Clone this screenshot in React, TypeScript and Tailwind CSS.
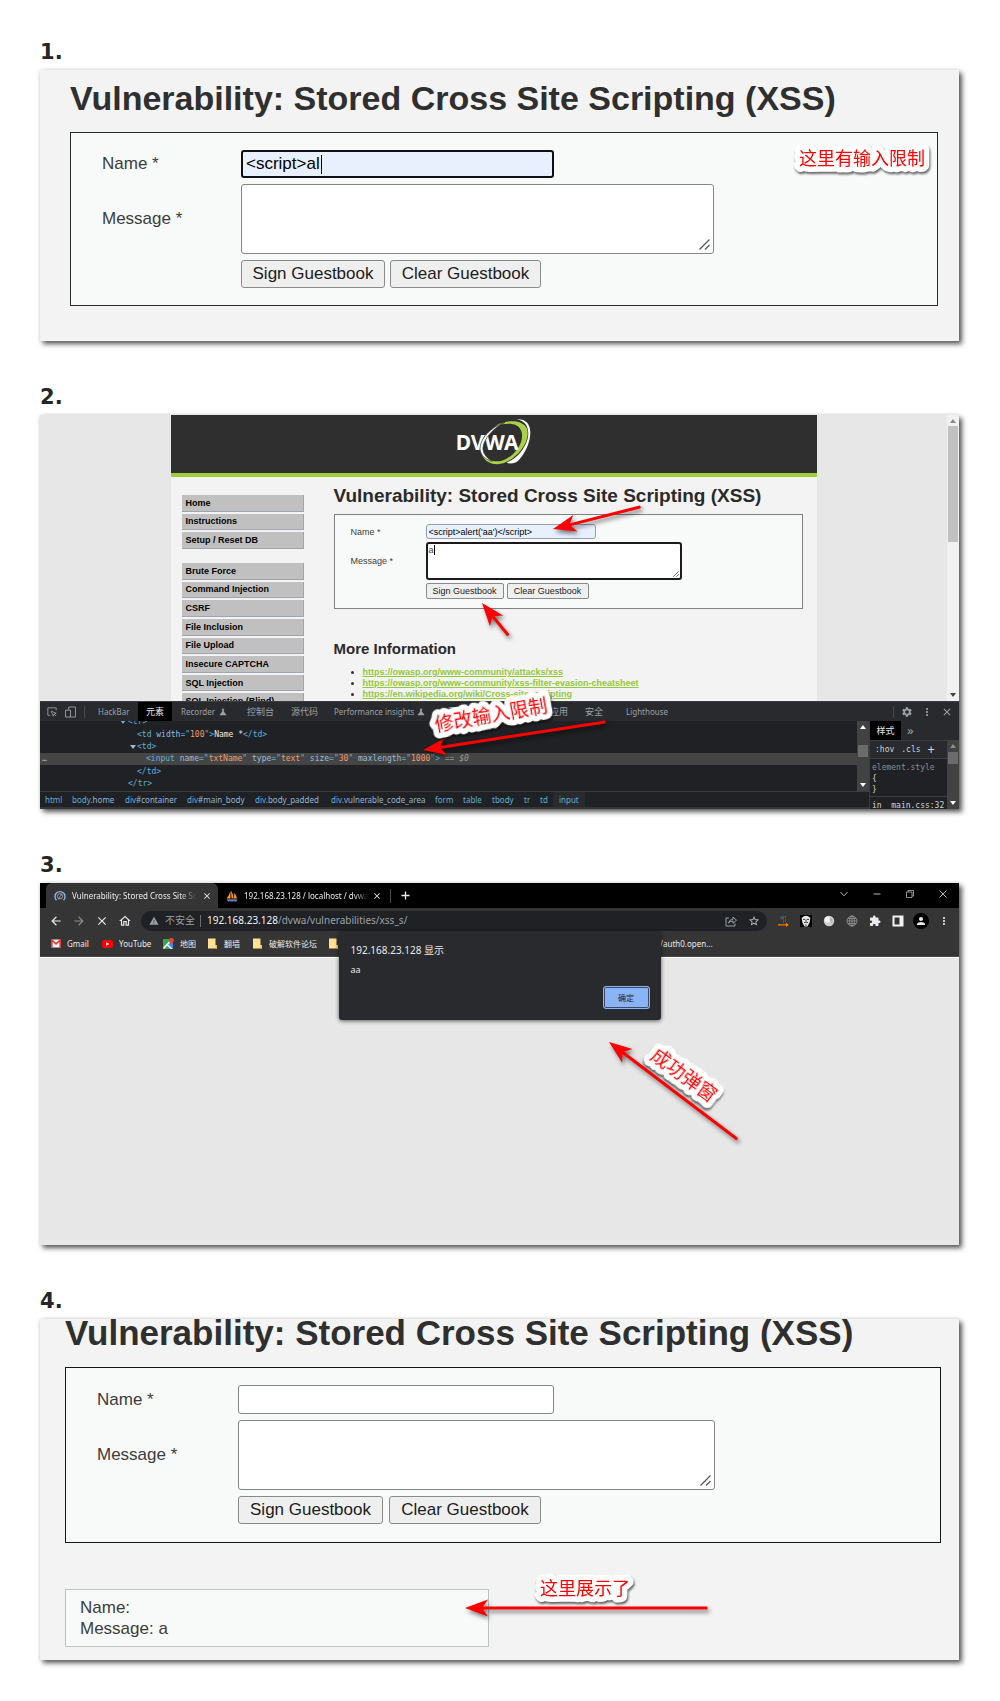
import type { ReactNode } from "react";
import {
  MdArrowBack,
  MdArrowForward,
  MdClose,
  MdExtension,
  MdMoreVert,
  MdOutlineHome,
  MdPerson,
  MdScience,
  MdSettings,
  MdStarBorder,
  MdWarning,
} from "react-icons/md";

const uiFont = "font-['Noto_Sans','Noto_Sans_CJK_SC',sans-serif]";
const arial = "font-['Liberation_Sans',Arial,sans-serif]";

/* ---------- shared pieces ---------- */

function Step({ n, children }: { n: number; children: ReactNode }) {
  return (
    <section className="flex flex-col gap-0.5">
      <h2 className="pt-px font-['DejaVu_Sans',Verdana,sans-serif] text-[21px] leading-8 font-bold text-[#262626]">{n}.</h2>
      <div className="relative shadow-[3px_3px_5px_rgba(0,0,0,0.65),0_0_4px_rgba(0,0,0,0.12)]">{children}</div>
    </section>
  );
}

/* Arrow pointing from tail to tip, drawn in its own small canvas. */
function Arrow({ from, to, className }: { from: [number, number]; to: [number, number]; className: string }) {
  const dx = to[0] - from[0];
  const dy = to[1] - from[1];
  const len = Math.hypot(dx, dy);
  const angle = (Math.atan2(dy, dx) * 180) / Math.PI;
  return (
    <svg
      className={`pointer-events-none absolute z-10 overflow-visible drop-shadow-[2px_3px_2px_rgba(0,0,0,0.5)] ${className}`}
      width={Math.max(Math.abs(dx), 1)}
      height={Math.max(Math.abs(dy), 1)}
      aria-hidden="true"
    >
      <g transform={`translate(${from[0]} ${from[1]}) rotate(${angle})`} fill="#fe0000">
        <path d={`M0 -1.5 L${len - 17} -1.5 L${len - 17} 1.5 L0 1.5 Q-1.5 0 0 -1.5Z`} />
        <path d={`M${len} 0 L${len - 23} 8.5 L${len - 17} 0 L${len - 23} -8.5Z`} />
      </g>
    </svg>
  );
}

/* Red handwritten-style remark with a thick white outline. */
function Note({ text, size, className }: { text: string; size: number; className: string }) {
  return (
    <svg
      className={`pointer-events-none absolute z-20 h-6 overflow-visible drop-shadow-[1px_2px_1px_rgba(0,0,0,0.6)] ${className}`}
      width={text.length * size}
    >
      <text
        y="19"
        fontSize={size}
        fill="#fe0000"
        stroke="#fff"
        strokeWidth="11"
        strokeLinejoin="round"
        strokeLinecap="round"
        paintOrder="stroke"
        fontFamily="'Noto Sans CJK SC', sans-serif"
      >
        {text}
      </text>
    </svg>
  );
}

function Grip({ small = false }: { small?: boolean }) {
  return (
    <svg
      viewBox="0 0 11 11"
      className={small ? "pointer-events-none absolute right-[3px] bottom-[3px] size-1.5" : "pointer-events-none absolute right-1 bottom-1 size-[11px]"}
      stroke="#555"
      strokeWidth={small ? 1.6 : 1.2}
      aria-hidden="true"
    >
      <path d="M0.5 10.5 L10.5 0.5 M6 10.5 L10.5 6" />
    </svg>
  );
}

type FormStyle = {
  box: string;
  rows: string;
  col: string;
  input: string;
  inputLine: string;
  area: string;
  areaLine: string;
  button: string;
  sign: string;
  clear: string;
  buttons: string;
};

function GuestbookForm({
  id,
  s,
  name = "",
  message = "",
  nameCaret,
  messageCaret,
  small,
}: {
  id: string;
  s: FormStyle;
  name?: string;
  message?: string;
  nameCaret?: string;
  messageCaret?: string;
  small?: boolean;
}) {
  return (
    <form className={`border bg-[#f8faf9] text-[#3c3c3c] ${s.box}`} onSubmit={(e) => e.preventDefault()}>
      <div className={`flex flex-col ${s.rows}`}>
        <div className="flex items-center">
          <label htmlFor={`${id}-name`} className={`shrink-0 ${s.col}`}>
            Name *
          </label>
          <div className={`relative ${s.input}`}>
            <input
              id={`${id}-name`}
              type="text"
              defaultValue={name}
              className={`block size-full rounded-[3px] text-black outline-none ${s.inputLine}`}
            />
            {nameCaret && <i className={`absolute w-px bg-black ${nameCaret}`} />}
          </div>
        </div>
        <div className="flex items-center">
          <label htmlFor={`${id}-message`} className={`shrink-0 ${s.col}`}>
            Message *
          </label>
          <div className={`relative ${s.area}`}>
            <textarea
              id={`${id}-message`}
              defaultValue={message}
              className={`block size-full resize-none overflow-hidden rounded-[3px] bg-white outline-none ${s.areaLine}`}
            />
            {messageCaret && <i className={`absolute w-px bg-black ${messageCaret}`} />}
            <Grip small={small} />
          </div>
        </div>
        <div className="flex">
          <span className={`shrink-0 ${s.col}`} />
          <div className={`flex ${s.buttons}`}>
            <button type="submit" className={`border border-[#8a8a8a] bg-[#efefef] text-[#1c1c1c] ${s.button} ${s.sign}`}>
              Sign Guestbook
            </button>
            <button type="reset" className={`border border-[#8a8a8a] bg-[#efefef] text-[#1c1c1c] ${s.button} ${s.clear}`}>
              Clear Guestbook
            </button>
          </div>
        </div>
      </div>
    </form>
  );
}

const bigForm: FormStyle = {
  box: "border-[#2a2a2a] pt-[17px] pb-[17px] pl-[31px] text-[17px] leading-5",
  rows: "gap-1.5",
  col: "w-[139px]",
  input: "h-7 w-[313px]",
  inputLine: "border-2 border-[#101014] bg-[#e8f0fe] px-[3px]",
  area: "h-[70px] w-[473px]",
  areaLine: "border border-[#858585]",
  button: "h-7 rounded-[3px]",
  sign: "w-36",
  clear: "w-[151px]",
  buttons: "gap-[5px]",
};

const resultForm: FormStyle = {
  ...bigForm,
  box: "border-[#151515] pt-[17px] pb-[18px] pl-[31px] text-[17px] leading-5",
  col: "w-[141px]",
  input: "h-[29px] w-[316px]",
  inputLine: "border border-[#858585] bg-white px-[3px]",
  area: "h-[70px] w-[477px]",
  sign: "w-[145px]",
  clear: "w-[152px]",
  buttons: "gap-1.5",
};

const smallForm: FormStyle = {
  box: "border-[#808080] pt-[9px] pb-[9px] pl-4 text-[9px] leading-3",
  rows: "gap-[3px]",
  col: "w-[75px]",
  input: "h-[15px] w-[170px]",
  inputLine: "border border-[#9a9fa8] bg-[#e8f0fe] px-0.5",
  area: "h-[38px] w-64",
  areaLine: "border-2 border-[#1a1a1a] px-px text-[#3c3c3c]",
  button: "h-4 rounded-[2px]",
  sign: "w-[78px]",
  clear: "w-[82px]",
  buttons: "gap-[3px]",
};

const title = "Vulnerability: Stored Cross Site Scripting (XSS)";

/* ---------- step 1 ---------- */

function StepOne() {
  return (
    <div className={`bg-[#f3f3f3] pt-2 pr-[21px] pb-[35px] pl-[30px] ${arial}`}>
      <h1 className="text-[34px] leading-10 font-bold whitespace-nowrap text-[#2f2f2f]">{title}</h1>
      <div className="mt-3.5">
        <GuestbookForm id="one" s={bigForm} name="<script>al" nameCaret="left-20 top-[5px] h-[19px]" />
      </div>
      <Note text="这里有输入限制" size={18} className="top-[76px] right-[34px]" />
    </div>
  );
}

/* ---------- step 2 ---------- */

function DvwaLogo() {
  return (
    <div className="relative h-[62px] w-[100px]" role="img" aria-label="DVWA">
      <svg viewBox="0 0 300 186" className="block size-full" aria-hidden="true">
        <path fill="#fff" d="M215 22 C245 20 262 40 254 80 C250 105 228 145 210 152 C200 156 190 154 185 152 C215 140 240 110 248 80 C254 50 245 28 215 22Z" />
        <path fill="#a9d048" d="M150 42 C190 20 235 24 246 50 C258 90 215 140 175 154 C145 162 112 150 108 116 C122 142 145 152 170 146 C205 136 238 95 230 60 C222 32 190 30 150 42Z" />
        <text x="32" y="115" fill="#fff" fontSize="63" fontWeight="700" fontFamily="'Noto Sans', sans-serif">
          DVWA
        </text>
        <path fill="#fff" stroke="#2f2f2f" strokeWidth="2" d="M180 31 C135 46 106 80 105 110 C107 130 120 142 142 148 C120 136 113 120 114 106 C117 80 145 48 180 31Z" />
      </svg>
    </div>
  );
}

const menuTop = ["Home", "Instructions", "Setup / Reset DB"];
const menuRest = ["Brute Force", "Command Injection", "CSRF", "File Inclusion", "File Upload", "Insecure CAPTCHA", "SQL Injection", "SQL Injection (Blind)"];

function Menu({ items, className }: { items: string[]; className: string }) {
  return (
    <ul className={`grid auto-rows-fr gap-0.5 ${className}`}>
      {items.map((item) => (
        <li key={item} className="grid">
          <a href="#" className="flex items-center border-r border-b border-[#a0a4ad] bg-[#c0c0c0] pl-1 text-[9px] leading-3 font-bold text-black">
            {item}
          </a>
        </li>
      ))}
    </ul>
  );
}

const links = [
  "https://owasp.org/www-community/attacks/xss",
  "https://owasp.org/www-community/xss-filter-evasion-cheatsheet",
  "https://en.wikipedia.org/wiki/Cross-site_scripting",
];

function Triangle({ up = false, className = "" }: { up?: boolean; className?: string }) {
  return (
    <svg viewBox="0 0 6 4" className={`h-1 w-1.5 shrink-0 fill-current ${className}`} aria-hidden="true">
      <path d={up ? "M0 4 L3 0 L6 4Z" : "M0 0 L3 4 L6 0Z"} />
    </svg>
  );
}

function DvwaPage() {
  return (
    <div className={`flex h-[286px] overflow-hidden bg-[#e7e7e7] ${arial}`}>
      <div className="flex-1">
        <div className="mx-auto w-[646px] bg-[#f3f3f3]">
          <div className="flex h-[62px] justify-center overflow-hidden border-b-4 border-[#a2cc39] bg-[#2f2f2f]">
            <div className="-mt-[3px] ml-0.5">
              <DvwaLogo />
            </div>
          </div>
          <div className="flex pt-[18px] pl-[11px]">
            <nav className="flex w-[122px] flex-col gap-3.5" aria-label="DVWA">
              <Menu items={menuTop} className="h-[54px]" />
              <Menu items={menuRest} className="h-[147px]" />
            </nav>
            <div className="-mt-[11px] ml-[30px] w-[469px]">
              <h1 className="text-[19px] leading-6 font-bold whitespace-nowrap text-[#2a2a2a]">{title}</h1>
              <div className="mt-1.5">
                <GuestbookForm
                  id="two"
                  s={smallForm}
                  small
                  name="<script>alert('aa')</script>"
                  message="a"
                  messageCaret="left-2 top-[3px] h-[10px]"
                />
              </div>
              <h2 className="mt-[30px] text-[15px] leading-5 font-bold text-[#2a2a2a]">More Information</h2>
              <ul className="mt-2 list-disc pl-[29px] text-[9px] leading-[11px] text-[#333]">
                {links.map((l) => (
                  <li key={l}>
                    <a href={l} className="font-bold text-[#93c83a] underline">
                      {l}
                    </a>
                  </li>
                ))}
              </ul>
            </div>
          </div>
        </div>
      </div>
      <div className="flex w-3 flex-col items-center bg-[#f1f1f1] text-[#8a8a8a]">
        <div className="flex h-[11px] items-center">
          <Triangle up />
        </div>
        <div className="h-[116px] w-2.5 bg-[#c1c1c1]" />
        <Triangle className="mt-auto mb-1 text-[#444]" />
      </div>
    </div>
  );
}

function Attr({ name, value }: { name: string; value: string }) {
  return (
    <>
      {" "}
      <span className="text-[#9bbbdc]">{name}</span>=&quot;<span className="text-[#f29766]">{value}</span>&quot;
    </>
  );
}

const crumbs: [string, string, string][] = [
  ["html", "", "w-[27px]"],
  ["body", ".home", "w-[53px]"],
  ["div", "#container", "w-[62px]"],
  ["div", "#main_body", "w-[68px]"],
  ["div", ".body_padded", "w-[76px]"],
  ["div", ".vulnerable_code_area", "w-[104px]"],
  ["form", "", "w-7"],
  ["table", "", "w-[29px]"],
  ["tbody", "", "w-8"],
  ["tr", "", "w-4"],
  ["td", "", "w-[13px]"],
];

function DevTools() {
  const cjk = "shrink-0 text-left text-[9px]";
  const latin = "shrink-0 text-left";
  return (
    <div className={`bg-[#202124] text-[8px] text-[#9aa0a6] ${uiFont}`}>
      <div className="flex h-5 items-center border-t border-[#3c3d40] bg-[#292a2d]">
        <div className="flex w-[58px] shrink-0 items-center gap-2 pl-[7px]">
          <svg viewBox="0 0 12 12" className="size-2.5" fill="none" stroke="currentColor" aria-label="Inspect">
            <path d="M4 10 H1 V1 H11 V4 M5 5 L11 7.5 L8.5 8.5 L7.5 11 Z M8.5 8.5 L11 11" />
          </svg>
          <svg viewBox="0 0 12 13" className="h-3 w-[11px]" fill="none" stroke="currentColor" aria-label="Device toolbar">
            <path d="M4 4 V1 H11.5 V12 H6 M0.5 4.5 H6 V12 H0.5Z" />
          </svg>
          <i className="h-3 w-px bg-[#4a4b4e]" />
        </div>
        <button className={`${latin} w-10`}>HackBar</button>
        <button className="h-full w-[34px] shrink-0 bg-black text-[9px] text-[#e8eaed]">元素</button>
        <button className={`${latin} flex w-[75px] items-center gap-[3px] pl-[9px]`}>
          Recorder <MdScience className="size-2.5" />
        </button>
        <button className={`${cjk} w-11`}>控制台</button>
        <button className={`${cjk} w-[43px]`}>源代码</button>
        <button className={`${latin} flex w-[114px] items-center gap-0.5`}>
          Performance insights <MdScience className="size-2.5" />
        </button>
        <button className={`${cjk} w-[102px]`}>网络</button>
        <button className={`${cjk} w-[35px]`}>应用</button>
        <button className={`${cjk} w-[41px]`}>安全</button>
        <button className={latin}>Lighthouse</button>
        <div className="mr-1.5 ml-auto flex items-center gap-2">
          <i className="h-3 w-px bg-[#4a4b4e]" />
          <MdSettings className="-ml-px size-3" />
          <MdMoreVert className="size-3" />
          <MdClose className="size-3" />
        </div>
      </div>
      <div className="flex h-[88px]">
        <div className="flex min-w-0 flex-1 flex-col">
          <div className="flex h-[70px]">
            <pre className="min-w-0 flex-1 overflow-hidden font-['DejaVu_Sans_Mono',monospace] leading-3 text-[#5db0d7]">
              <div className="-mt-[5px] flex h-3 items-center pl-[80px]">
                <Triangle className="mr-0.5" />
                &lt;tr&gt;
              </div>
              <div className="h-[13px] pl-[97px] leading-[13px]">
                &lt;td
                <Attr name="width" value="100" />
                &gt;<b className="font-medium text-[#e8eaed]">Name *</b>&lt;/td&gt;
              </div>
              <div className="flex h-3 items-center pl-[90px]">
                <Triangle className="mr-px text-[#b0b3b8]" />
                &lt;td&gt;
              </div>
              <div className="flex h-3 bg-[#454545]">
                <span className="w-[106px] pl-0.5 text-[#b0b3b8]">…</span>
                <span>
                  &lt;input
                  <Attr name="name" value="txtName" />
                  <Attr name="type" value="text" />
                  <Attr name="size" value="30" />
                  <Attr name="maxlength" value="1000" />
                  &gt;<i className="text-[#9a9a9a]"> == $0</i>
                </span>
              </div>
              <div className="h-[13px] pl-[97px] leading-[13px]">&lt;/td&gt;</div>
              <div className="h-3 pl-[88px]">&lt;/tr&gt;</div>
            </pre>
            <div className="flex w-3 flex-col items-center bg-[#424242] py-1 text-white">
              <Triangle up />
              <div className="mt-4 h-3 w-2.5 bg-[#6b6b6b]" />
              <Triangle className="mt-auto" />
            </div>
          </div>
          <div className="flex flex-1 items-center border-t border-b-2 border-t-[#3c3d40] border-b-[#35363a] pl-[5px] text-[#5db0d7]">
            {crumbs.map(([tag, rest, w], i) => (
              <span key={i} className={`shrink-0 ${w}`}>
                {tag}
                <span className="text-[#8fb4d8]">{rest}</span>
              </span>
            ))}
            <span className="flex h-full items-center bg-[#292a2d] px-1.5">input</span>
          </div>
        </div>
        <div className="flex w-[90px] shrink-0 flex-col border-l border-[#3c3d40]">
          <div className="flex h-[19px] shrink-0 items-center bg-[#292a2d]">
            <span className="flex h-full w-[31px] items-center justify-center bg-black text-[9px] text-[#e8eaed]">样式</span>
            <span className="ml-1.5 pb-0.5 text-[13px] leading-3">»</span>
          </div>
          <div className="flex h-[69px] font-['DejaVu_Sans_Mono',monospace]">
            <div className="min-w-0 flex-1 overflow-hidden">
              <div className="flex h-[19px] items-center gap-[7px] border-y border-[#3c3d40] bg-[#292a2d] pl-[5px] text-[#d0d3d7]">
                <span>:hov</span>
                <span>.cls</span>
                <span className="text-[12px]">+</span>
              </div>
              <div className="h-[37px] pt-[3px] pl-0.5 leading-[11px]">
                <div className="text-[#8a8d91]">element.style</div>
                <div className="text-[#d0d3d7]">{"{"}</div>
                <div className="text-[#d0d3d7]">{"}"}</div>
              </div>
              <div className="border-t border-[#3c3d40] pt-[3px] pl-0.5 whitespace-pre text-[#d0d3d7]">in  main.css:32</div>
            </div>
            <div className="flex w-3 shrink-0 flex-col items-center bg-[#424242] py-1 text-white">
              <Triangle up className="text-[#8a8a8a]" />
              <div className="mt-1 h-3 w-2.5 bg-[#6b6b6b]" />
              <Triangle className="mt-auto" />
            </div>
          </div>
        </div>
      </div>
    </div>
  );
}

function StepTwo() {
  return (
    <div>
      <DvwaPage />
      <DevTools />
      <Arrow className="top-[92px] left-[513px]" from={[87, 0]} to={[0, 22]} />
      <Arrow className="top-[188px] left-[442px]" from={[26, 32]} to={[0, 0]} />
      <Arrow className="top-[307px] left-[383px]" from={[182, 0]} to={[0, 28]} />
      <Note text="修改输入限制" size={19} className="top-[288px] left-[394px] -rotate-10" />
    </div>
  );
}

/* ---------- step 3 ---------- */

function Folder() {
  return (
    <svg viewBox="0 0 9 11" className="h-[11px] w-[9px] shrink-0" aria-hidden="true">
      <path fill="#fde293" d="M0 0.5 H7.5 V7 H9 V10.5 H0Z" />
      <path fill="#e9c35a" d="M7.5 7 H9 V10.5 H7.5Z" />
    </svg>
  );
}

function Bookmark({ icon, label, className }: { icon: ReactNode; label: string; className: string }) {
  return (
    <a href="#" className={`flex shrink-0 items-center ${className}`}>
      {icon}
      <span>{label}</span>
    </a>
  );
}

function BrowserTabs() {
  return (
    <div className="flex h-[25px] bg-black pl-1.5 text-[8px] text-[#e8eaed]">
      <div className="flex w-[172px] items-center rounded-t-md bg-[#353535] pr-1.5 pl-2">
        <svg viewBox="0 0 12 12" className="size-3 shrink-0" fill="none" aria-hidden="true">
          <path d="M2.5 10.2 A5 5 0 1 1 9.5 10.2" stroke="#8ab4f8" strokeWidth="1.4" />
          <circle cx="6" cy="6.3" r="2.6" stroke="#9aa0a6" />
          <path d="M4 9.5 L8 3.6" stroke="#9aa0a6" />
        </svg>
        <span className="ml-1.5 w-[125px] overflow-hidden whitespace-nowrap [mask-image:linear-gradient(90deg,#000_86%,transparent)]">
          Vulnerability: Stored Cross Site Scripting
        </span>
        <MdClose className="ml-auto size-2.5" />
      </div>
      <div className="flex w-[172px] items-center pr-2 pl-2">
        <svg viewBox="0 0 12 12" className="size-3 shrink-0" aria-hidden="true">
          <path fill="#f89c0e" d="M0.5 8.5 Q3 6 4.5 1 L4.5 8.5Z M5.5 8.5 L5 0.5 Q7.5 4 7.5 8.5Z M8 8.5 L8.2 3 Q10.5 5 11 8.5Z" />
          <path fill="#6c78af" d="M0.5 9.2 H11.5 L10.5 11.5 H2Z" />
        </svg>
        <span className="ml-1.5 w-[125px] overflow-hidden whitespace-nowrap [mask-image:linear-gradient(90deg,#000_88%,transparent)]">
          192.168.23.128 / localhost / dvwa / guestbook
        </span>
        <MdClose className="ml-auto size-2.5" />
      </div>
      <div className="flex items-center gap-2.5 text-[#e8eaed]">
        <i className="h-3.5 w-px bg-[#4a4b4e]" />
        <svg viewBox="0 0 10 10" className="size-[9px]" stroke="currentColor" strokeWidth="1.5" aria-label="New tab">
          <path d="M5 0.5 V9.5 M0.5 5 H9.5" />
        </svg>
      </div>
      <div className="mr-3 ml-auto flex items-center gap-[25px] pb-1 text-[#b4b4b4]">
        <svg viewBox="0 0 8 8" className="size-2" fill="none" stroke="currentColor" aria-label="Search tabs">
          <path d="M0.5 2 L4 5.8 L7.5 2" />
        </svg>
        <svg viewBox="0 0 8 8" className="size-2" fill="none" stroke="currentColor" aria-label="Minimize">
          <path d="M0.5 4 H7.5" />
        </svg>
        <svg viewBox="0 0 8 8" className="size-2" fill="none" stroke="currentColor" strokeWidth="0.8" aria-label="Restore">
          <path d="M0.5 2 H6 V7.5 H0.5Z M2 2 V0.5 H7.5 V6 H6" />
        </svg>
        <svg viewBox="0 0 8 8" className="size-2" fill="none" stroke="currentColor" aria-label="Close">
          <path d="M0.5 0.5 L7.5 7.5 M7.5 0.5 L0.5 7.5" />
        </svg>
      </div>
    </div>
  );
}

function AddressRow() {
  return (
    <div className="flex h-[25px] items-center pl-[9px] text-[#e8eaed]">
      <div className="flex w-[92px] shrink-0 items-center gap-[9px]">
        <MdArrowBack className="size-3.5" />
        <MdArrowForward className="size-3.5 text-[#8a8d91]" />
        <MdClose className="size-3.5" />
        <MdOutlineHome className="size-3.5" />
      </div>
      <div className="flex h-5 min-w-0 flex-1 items-center rounded-full bg-[#202124] pr-[7px] pl-2 text-[10px] text-[#9aa0a6]">
        <MdWarning className="size-2.5 shrink-0" />
        <span className="ml-1.5 shrink-0">不安全</span>
        <i className="mr-1.5 ml-[5px] h-3 w-px bg-[#6a6d70]" />
        <span className="text-[#f1f3f4]">192.168.23.128</span>
        <span>/dvwa/vulnerabilities/xss_s/</span>
        <svg viewBox="0 0 12 12" className="ml-auto size-3" fill="none" stroke="currentColor" aria-label="Share">
          <path d="M4 3 H1 V11 H10 V8.5 M3.5 8 Q4 4.5 8 4.3 V2 L11.5 5.2 L8 8.3 V6.2 Q5 6 3.5 8Z" />
        </svg>
        <MdStarBorder className="ml-[11px] size-3 text-[#c4c7c5]" />
      </div>
      <div className="mr-2.5 ml-2.5 flex shrink-0 items-center gap-[11px]">
        <svg viewBox="0 0 12 12" className="size-3" aria-hidden="true">
          <path d="M4.5 1.5 H9.5 M6.5 1.5 V8 M8.5 1.5 V8" stroke="#3f5866" fill="none" />
          <circle cx="4.8" cy="3" r="1.8" fill="#3f5866" />
          <path d="M1 9.3 H9 V7.8 L12 10 L9 12 V10.6 H1Z" fill="#f57c00" />
        </svg>
        <svg viewBox="0 0 12 12" className="size-3" aria-hidden="true">
          <rect width="12" height="12" fill="#000" />
          <path fill="#e6e6e6" d="M1.6 3 Q6 -1.5 10.4 3 L9.6 7.5 L7.5 11.5 H4.5 L2.4 7.5Z" />
          <path stroke="#111" fill="none" strokeWidth="0.8" d="M3 4.4 H5.2 M6.8 4.4 H9 M6 4.8 V6.6 M4 7.6 Q6 6.8 8 7.6 M6 9.2 V11" />
        </svg>
        <svg viewBox="0 0 12 12" className="size-3" aria-hidden="true">
          <circle cx="6" cy="6" r="5.2" fill="#cfcfcf" />
          <circle cx="4.6" cy="4.6" r="3" fill="#f2f2f2" />
          <path d="M6.5 2.5 L9.5 4 L9 8 L7 6Z" fill="#b2b2b2" />
        </svg>
        <svg viewBox="0 0 12 12" className="size-3" fill="none" stroke="#a0a0a0" strokeWidth="0.7" aria-hidden="true">
          <circle cx="6" cy="6" r="5" />
          <ellipse cx="6" cy="6" rx="2.4" ry="5" />
          <path d="M1 6 H11 M6 1 V11 M2 3.5 H10 M2 8.5 H10" />
        </svg>
        <MdExtension className="size-3" />
        <svg viewBox="0 0 12 12" className="size-3" aria-hidden="true">
          <path fill="#f1f3f4" fillRule="evenodd" d="M0.5 0.5 H11.5 V11.5 H0.5Z M2.5 2.5 V9.5 H7.5 V2.5Z" />
        </svg>
        <span className="-mx-0.5 flex size-4 items-center justify-center rounded-full bg-black">
          <MdPerson className="size-3" />
        </span>
        <MdMoreVert className="-mr-px size-3" />
      </div>
    </div>
  );
}

function Bookmarks() {
  return (
    <div className="flex h-6 items-center border-b border-[#4a4a4a] pb-0.5 pl-[11px] text-[8px] text-[#e8eaed]">
      <Bookmark
        className="w-[51px] gap-1.5"
        label="Gmail"
        icon={
          <svg viewBox="0 0 10 9" className="h-[9px] w-2.5" aria-hidden="true">
            <path fill="#f1f1f1" d="M0 0.5 H10 V8.5 H0Z" />
            <path fill="none" stroke="#e53935" strokeWidth="1.6" d="M0.8 8.5 V1 L5 4.8 L9.2 1 V8.5" />
          </svg>
        }
      />
      <Bookmark
        className="w-[61px] gap-1.5"
        label="YouTube"
        icon={
          <svg viewBox="0 0 11 8" className="h-2 w-[11px]" aria-hidden="true">
            <rect width="11" height="8" rx="2" fill="#f00" />
            <path fill="#fff" d="M4.2 2.2 L7.4 4 L4.2 5.8Z" />
          </svg>
        }
      />
      <Bookmark
        className="w-[45px] gap-1.5"
        label="地图"
        icon={
          <svg viewBox="0 0 11 11" className="size-[11px]" aria-hidden="true">
            <rect y="1" width="10" height="10" fill="#34a853" />
            <path fill="#4285f4" d="M10 11 L4 5 L10 3Z" />
            <path stroke="#f5f5f5" strokeWidth="1.6" d="M0.5 10.5 L7 3.5 M3.5 6 L9 11" />
            <path fill="#ea4335" d="M8.3 0 Q11 0 10.8 2.6 Q10.6 4 8.3 6.5 Q6 4 5.8 2.6 Q5.8 0 8.3 0Z" />
          </svg>
        }
      />
      <Bookmark className="w-[45px] gap-[7px]" label="翻墙" icon={<Folder />} />
      <Bookmark className="w-[76px] gap-[7px]" label="破解软件论坛" icon={<Folder />} />
      <Folder />
      <a href="#" className="ml-[322px]">
        /auth0.open...
      </a>
    </div>
  );
}

function StepThree() {
  return (
    <div className={`bg-[#353535] ${uiFont}`}>
      <BrowserTabs />
      <AddressRow />
      <Bookmarks />
      <div className="h-[288px] border-t border-white bg-[#e7e7e7]" />
      <div
        role="dialog"
        aria-label="192.168.23.128 显示"
        className="absolute top-12 left-1/2 flex h-[89px] w-[322px] -translate-x-[161px] flex-col rounded-[3px] bg-[#292a2d] pt-[11px] pr-[11px] pb-[11px] pl-3 text-[#e8eaed] shadow-[0_1px_4px_rgba(0,0,0,0.6)]"
      >
        <p className="text-[10px] leading-4">192.168.23.128 显示</p>
        <p className="mt-1 text-[9px] leading-4">aa</p>
        <button className="mt-auto ml-auto h-[23px] w-[47px] shrink-0 rounded-[3px] border border-[#8ab4f8] bg-[#8ab4f8] text-[8px] text-[#202124] shadow-[inset_0_0_0_1px_#3c4a63]">
          确定
        </button>
      </div>
      <Arrow className="top-[159px] left-[569px]" from={[128, 97]} to={[0, 0]} />
      <Note text="成功弹窗" size={19} className="top-[180px] left-[606px] rotate-36" />
    </div>
  );
}

/* ---------- step 4 ---------- */

function StepFour() {
  return (
    <div className={`flow-root bg-[#f3f3f3] pr-[18px] pb-[13px] pl-[25px] ${arial}`}>
      <h1 className="-mt-1.5 text-[35px] leading-10 font-bold whitespace-nowrap text-[#2f2f2f]">{title}</h1>
      <div className="mt-3.5">
        <GuestbookForm id="four" s={resultForm} />
      </div>
      <div className="mt-[46px] w-[424px] border border-[#bfc2c1] bg-[#f8faf9] py-[7px] pl-3.5 text-[17px] leading-[21px] text-[#3c3c3c]">
        <div>Name:</div>
        <div>Message: a</div>
      </div>
      <Arrow className="bottom-[51px] left-[425px]" from={[242, 0]} to={[0, 0]} />
      <Note text="这里展示了" size={18} className="bottom-[60px] left-[500px]" />
    </div>
  );
}

export default function App() {
  return (
    <main className="flex flex-col gap-[39px] bg-white pt-[35px] pr-[41px] pb-10 pl-10">
      <Step n={1}>
        <StepOne />
      </Step>
      <Step n={2}>
        <StepTwo />
      </Step>
      <Step n={3}>
        <StepThree />
      </Step>
      <Step n={4}>
        <StepFour />
      </Step>
    </main>
  );
}
